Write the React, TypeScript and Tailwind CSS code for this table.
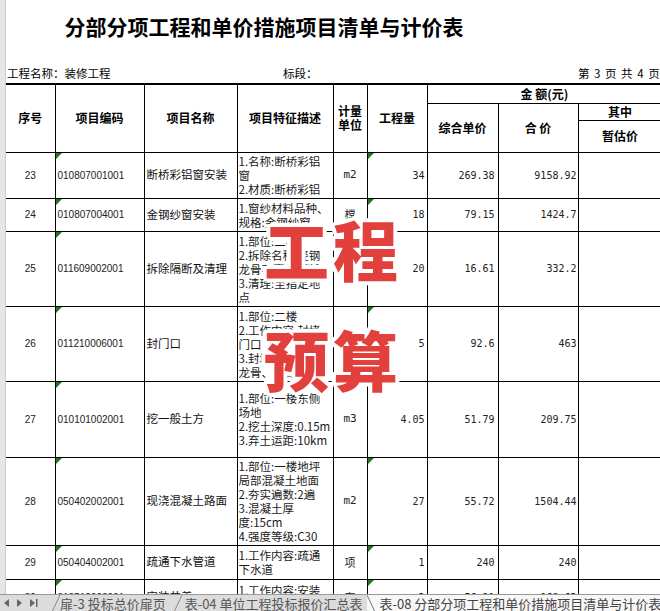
import React from "react";

type Row = {
  no: string;
  code: string;
  name: string;
  desc: string[];
  unit: string;
  qty: string;
  price: string;
  total: string;
  h: string;
  inner: string;
  triCode: boolean;
  triQty: boolean;
};

const rows: Row[] = [
  { no: "23", code: "010807001001", name: "断桥彩铝窗安装", desc: ["1.名称:断桥彩铝", "窗", "2.材质:断桥彩铝"], unit: "m2", qty: "34", price: "269.38", total: "9158.92", h: "h-[46px]", inner: "max-h-[45px]", triCode: true, triQty: true },
  { no: "24", code: "010807004001", name: "金钢纱窗安装", desc: ["1.窗纱材料品种、", "规格:金钢纱窗"], unit: "樘", qty: "18", price: "79.15", total: "1424.7", h: "h-[33px]", inner: "max-h-[32px]", triCode: true, triQty: true },
  { no: "25", code: "011609002001", name: "拆除隔断及清理", desc: ["1.部位:二楼", "2.拆除名称:轻钢", "龙骨石膏板隔断", "3.清理:至指定地", "点"], unit: "m2", qty: "20", price: "16.61", total: "332.2", h: "h-[75px]", inner: "max-h-[74px]", triCode: true, triQty: false },
  { no: "26", code: "011210006001", name: "封门口", desc: ["1.部位:二楼", "2.工作内容:封堵", "门口", "3.封堵材料:轻钢", "龙骨、石膏板"], unit: "m2", qty: "5", price: "92.6", total: "463", h: "h-[75px]", inner: "max-h-[74px]", triCode: true, triQty: true },
  { no: "27", code: "010101002001", name: "挖一般土方", desc: ["1.部位:一楼东侧", "场地", "2.挖土深度:0.15m", "3.弃土运距:10km"], unit: "m3", qty: "4.05", price: "51.79", total: "209.75", h: "h-[76px]", inner: "max-h-[75px]", triCode: true, triQty: false },
  { no: "28", code: "050402002001", name: "现浇混凝土路面", desc: ["1.部位:一楼地坪", "局部混凝土地面", "2.夯实遍数:2遍", "3.混凝土厚", "度:15cm", "4.强度等级:C30"], unit: "m2", qty: "27", price: "55.72", total: "1504.44", h: "h-[88px]", inner: "max-h-[87px]", triCode: true, triQty: true },
  { no: "29", code: "050404002001", name: "疏通下水管道", desc: ["1.工作内容:疏通", "下水道"], unit: "项", qty: "1", price: "240", total: "240", h: "h-[34px]", inner: "max-h-[33px]", triCode: true, triQty: true },
  { no: "30", code: "010512008001", name: "安装井盖", desc: ["1.工作内容:安装", "井盖"], unit: "套", qty: "3", price: "56.21", total: "168.63", h: "h-[36px]", inner: "max-h-[35px]", triCode: true, triQty: true },
];

const cjk = "font-['Noto_Sans_CJK_SC',sans-serif]";
const mono = "font-['DejaVu_Sans_Mono',monospace]";

function Tri() {
  return (
    <span className="absolute left-0 top-0 h-0 w-0 border-t-[6px] border-r-[6px] border-t-[#1b7a1b] border-r-transparent" />
  );
}

const th = `border border-black p-0 text-center align-middle text-[12px] font-bold leading-[14px] text-black ${cjk}`;
const td = "border border-black p-0 align-middle";

export default function App() {
  return (
    <div className={`relative h-[611px] w-[660px] overflow-hidden bg-white ${cjk}`}>
      <div className="flex h-[594px] w-full">
        <div className="w-[6px] shrink-0 border-r border-[#cfcfcf] bg-[#e6e6e6]" />
        <div className="flex min-w-0 flex-1 flex-col overflow-hidden">
          <div className="h-[60px] shrink-0 pr-[138px] pt-[12px] text-center text-[21px] font-semibold leading-[28px] text-black whitespace-nowrap">
            分部分项工程和单价措施项目清单与计价表
          </div>
          <div className="grid h-[23px] shrink-0 grid-cols-[277px_295px_1fr] items-end pb-[2px] text-[11.5px] leading-[16px] text-black whitespace-nowrap">
            <span className="pl-[1px]">工程名称：装修工程</span>
            <span>标段：</span>
            <span className="overflow-hidden tracking-[1px]">第 3 页 共 4 页</span>
          </div>
          <div className="min-h-0 flex-1 overflow-hidden">
            <table className="w-[656px] table-fixed border-collapse">
              <colgroup>
                <col className="w-[49px]" />
                <col className="w-[89px]" />
                <col className="w-[93px]" />
                <col className="w-[96px]" />
                <col className="w-[34px]" />
                <col className="w-[60px]" />
                <col className="w-[71px]" />
                <col className="w-[80px]" />
                <col className="w-[84px]" />
              </colgroup>
              <thead>
                <tr className="h-[19px]">
                  <th rowSpan={3} className={`${th} border-t-2 border-l-0`}>序号</th>
                  <th rowSpan={3} className={`${th} border-t-2`}>项目编码</th>
                  <th rowSpan={3} className={`${th} border-t-2`}>项目名称</th>
                  <th rowSpan={3} className={`${th} border-t-2`}>项目特征描述</th>
                  <th rowSpan={3} className={`${th} border-t-2 leading-[13px]`}>
                    计量
                    <br />
                    单位
                  </th>
                  <th rowSpan={3} className={`${th} border-t-2`}>工程量</th>
                  <th colSpan={3} className={`${th} border-t-2`}>金 额(元)</th>
                </tr>
                <tr className="h-[17px]">
                  <th rowSpan={2} className={th}>综合单价</th>
                  <th rowSpan={2} className={th}>合 价</th>
                  <th className={th}>其中</th>
                </tr>
                <tr className="h-[32px]">
                  <th className={th}>暂估价</th>
                </tr>
              </thead>
              <tbody>
                {rows.map((r) => (
                  <tr key={r.no} className={r.h}>
                    <td className={`${td} border-l-0 text-center font-['Liberation_Sans',sans-serif] text-[10px] text-[#222]`}>{r.no}</td>
                    <td className={`${td} relative pl-[2px] font-['Liberation_Sans',sans-serif] text-[10px] text-[#222]`}>
                      {r.triCode && <Tri />}
                      {r.code}
                    </td>
                    <td className={`${td} pl-[2px] text-[11.5px] text-[#111] whitespace-nowrap overflow-hidden`}>{r.name}</td>
                    <td className={`${td} overflow-hidden pl-[1px]`}>
                      <div className={`flex flex-col justify-center overflow-hidden ${r.inner}`}>
                        {r.desc.map((d, i) => (
                          <div key={i} className="whitespace-nowrap text-[11.5px] leading-[14px] text-[#1a1a1a]">
                            {d}
                          </div>
                        ))}
                      </div>
                    </td>
                    <td className={`${td} text-center text-[11px] text-[#222] ${/[a-z]/.test(r.unit) ? mono + " text-[10px]" : ""}`}>{r.unit}</td>
                    <td className={`${td} relative pr-[2px] text-right ${mono} text-[10px] text-[#222]`}>
                      {r.triQty && <Tri />}
                      {r.qty}
                    </td>
                    <td className={`${td} pr-[3px] text-right ${mono} text-[10px] text-[#222]`}>{r.price}</td>
                    <td className={`${td} pr-[1px] text-right ${mono} text-[10px] text-[#222]`}>{r.total}</td>
                    <td className={td}></td>
                  </tr>
                ))}
              </tbody>
            </table>
          </div>
        </div>
      </div>

      {/* sheet tab bar */}
      <div className="flex h-[17px] w-full items-center overflow-hidden border-t border-[#9a9a9a] bg-[#dcdcdc] text-[13px] leading-[17px] text-[#555] whitespace-nowrap">
        <div className="flex w-[38px] shrink-0 items-center gap-[6px] pl-[3px]">
          <svg width="7" height="8" viewBox="0 0 7 8"><path d="M6 0 L1 4 L6 8 Z" fill="#666" /></svg>
          <svg width="7" height="8" viewBox="0 0 7 8"><path d="M1 0 L6 4 L1 8 Z" fill="#666" /></svg>
          <svg width="9" height="8" viewBox="0 0 9 8"><path d="M1 0 L6 4 L1 8 Z" fill="#666" /><rect x="7" y="0" width="1.5" height="8" fill="#666" /></svg>
        </div>
        <div className="h-full w-px bg-[#9a9a9a]" />
        <div className="flex h-full items-center pl-[14px]">
          <svg width="8" height="17" viewBox="0 0 8 17"><path d="M0 17 L8 0" stroke="#888" strokeWidth="1" /></svg>
          <span className="pr-[8px]">扉-3 投标总价扉页</span>
          <svg width="8" height="17" viewBox="0 0 8 17"><path d="M0 17 L8 0" stroke="#888" strokeWidth="1" /></svg>
          <span className="pl-[3px] pr-[4px]">表-04 单位工程投标报价汇总表</span>
          <div className="flex h-full items-center bg-[#f7f7f7]">
            <svg width="8" height="17" viewBox="0 0 8 17"><path d="M0 0 L8 17" stroke="#777" strokeWidth="1" /></svg>
            <span className="pl-[5px] text-[#444]">表-08 分部分项工程和单价措施项目清单与计价表</span>
          </div>
        </div>
      </div>

      {/* watermark */}
      <div className="pointer-events-none absolute left-[264px] top-[216px] text-[65px] font-black leading-none tracking-[4px] text-[#e2403d] whitespace-nowrap [text-shadow:4px_0_#fff,-4px_0_#fff,0_4px_#fff,0_-4px_#fff,3px_3px_#fff,-3px_-3px_#fff,3px_-3px_#fff,-3px_3px_#fff]">
        工程
      </div>
      <div className="pointer-events-none absolute left-[264px] top-[326px] text-[65px] font-black leading-none tracking-[4px] text-[#e2403d] whitespace-nowrap [text-shadow:4px_0_#fff,-4px_0_#fff,0_4px_#fff,0_-4px_#fff,3px_3px_#fff,-3px_-3px_#fff,3px_-3px_#fff,-3px_3px_#fff]">
        预算
      </div>
    </div>
  );
}
